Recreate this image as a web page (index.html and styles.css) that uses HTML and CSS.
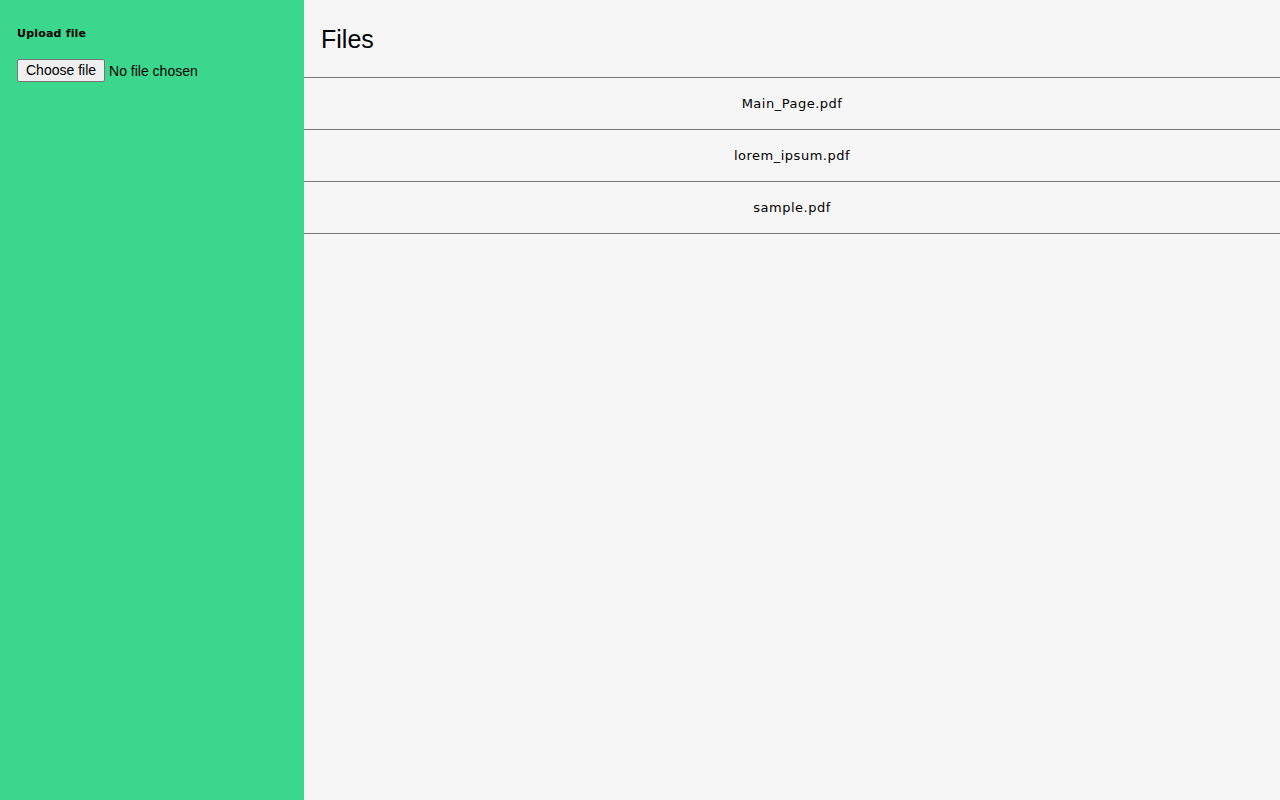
FILE: index.html
```html
<!DOCTYPE html>
<html>
<head>
<meta charset="utf-8">
<link rel="stylesheet" href="styles.css">
</head>
<body>
<div class="app">
  <aside class="sidebar">
    <h5 class="upload-title">Upload file</h5>
    <div class="file-input">
      <button class="choose-btn" type="button">Choose file</button>
      <span class="no-file">No file chosen</span>
    </div>
  </aside>
  <main class="main">
    <h1 class="title">Files</h1>
    <ul class="file-list">
      <li class="file-row">Main_Page.pdf</li>
      <li class="file-row">lorem_ipsum.pdf</li>
      <li class="file-row">sample.pdf</li>
    </ul>
  </main>
</div>
</body>
</html>
```
FILE: styles.css
```css
html, body {
  margin: 0;
  padding: 0;
  height: 100%;
}
body {
  font-family: "Liberation Sans", Arial, sans-serif;
  background: #f6f6f6;
  color: #000;
}
.app {
  display: flex;
  height: 800px;
}
.sidebar {
  width: 304px;
  flex: none;
  background: #3bd78d;
  padding: 27px 17px;
  box-sizing: border-box;
}
.upload-title {
  margin: 0 0 18px;
  font-family: "DejaVu Sans", Verdana, sans-serif;
  font-size: 11px;
  font-weight: bold;
  line-height: 14px;
  letter-spacing: 0.2px;
}
.file-input {
  display: flex;
  align-items: center;
  gap: 4px;
  font-family: "Liberation Sans", Arial, sans-serif;
  font-size: 14px;
}
.choose-btn {
  font-family: "Liberation Sans", Arial, sans-serif;
  font-size: 14px;
  height: 23px;
  padding: 0 8px;
  background: #efefef;
  border: 1px solid #767676;
  border-radius: 2px;
  color: #000;
  line-height: 19px;
}
.main {
  flex: 1;
  min-width: 0;
}
.title {
  margin: 0;
  height: 77px;
  box-sizing: border-box;
  padding: 24px 17px 0;
  font-family: "Liberation Sans", Arial, sans-serif;
  font-size: 25px;
  font-weight: normal;
  line-height: 30px;
}
.file-list {
  list-style: none;
  margin: 0;
  padding: 0;
  border-top: 1px solid #777;
}
.file-row {
  height: 51px;
  border-bottom: 1px solid #777;
  display: flex;
  align-items: center;
  justify-content: center;
  font-family: "DejaVu Sans", Verdana, sans-serif;
  font-size: 13px;
  letter-spacing: 0.5px;
}
```
